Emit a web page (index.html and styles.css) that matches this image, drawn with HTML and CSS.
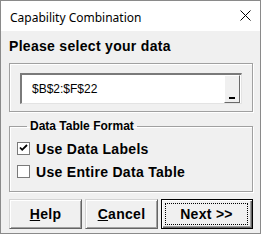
FILE: index.html
```html
<!DOCTYPE html>
<html>
<head>
    <title>Capability Combination</title>
    <link rel="stylesheet" href="styles.css">
</head>
<body>
    <div class="window">
        <div class="titlebar">
            <span class="title">Capability Combination</span>
            <svg class="close" width="11" height="11" viewBox="0 0 11 11">
                <path d="M0.5 0.5 L10.5 10.5 M10.5 0.5 L0.5 10.5" stroke="#000" stroke-width="1" fill="none"/>
            </svg>
        </div>
        <div class="content">
            <div class="prompt">Please select your data</div>
            <div class="frame">
                <div class="field">
                    <span class="field-text">$B$2:$F$22</span>
                    <span class="ref-btn"><span class="ref-bar"></span></span>
                </div>
            </div>
            <fieldset class="group">
                <legend>Data Table Format</legend>
                <label class="check">
                    <span class="box">
                        <svg width="11" height="11" viewBox="0 0 11 11">
                            <path d="M2 4.5 L4.2 6.8 L9 2" stroke="#000" stroke-width="1.8" fill="none"/>
                        </svg>
                    </span>
                    Use Data Labels
                </label>
                <label class="check">
                    <span class="box"></span>
                    Use Entire Data Table
                </label>
            </fieldset>
            <div class="buttons">
                <button class="btn"><u>H</u>elp</button>
                <button class="btn"><u>C</u>ancel</button>
                <button class="btn default"><span class="focus">Next &gt;&gt;</span></button>
            </div>
        </div>
    </div>
</body>
</html>
```

FILE: styles.css
```css
body {
    margin: 0;
    background: #fff;
}

.window {
    width: 261px;
    height: 234px;
    box-sizing: border-box;
    border: 1px solid #8a8a8a;
    display: flex;
    flex-direction: column;
    font-family: "Liberation Sans", Arial, sans-serif;
    color: #000;
}

.titlebar {
    height: 30px;
    flex: none;
    background: #fff;
    display: flex;
    align-items: center;
    justify-content: space-between;
    padding: 0 9px 0 9px;
}

.title {
    font-family: "Noto Sans", sans-serif;
    font-size: 12px;
    padding-top: 2px;
}

.close {
    margin-top: -1px;
}

.content {
    flex: 1;
    background: #f0f0f0;
    padding: 7px 7px 0 8px;
    display: flex;
    flex-direction: column;
}

.prompt {
    font-weight: bold;
    font-size: 14px;
    letter-spacing: 0.3px;
    line-height: 16px;
}

.frame {
    margin-top: 9px;
    border: 1px solid #a0a0a0;
    box-shadow: inset 1px 1px 0 #fff, 1px 1px 0 #fff;
    padding: 9px 10px 7px 10px;
}

.field {
    height: 31px;
    box-sizing: border-box;
    display: flex;
    align-items: center;
    background: #fff;
    border-style: solid;
    border-width: 2px 1px 1px 2px;
    border-color: #7a7a7a #e3e3e3 #e3e3e3 #7a7a7a;
}

.field-text {
    flex: 1;
    font-size: 12px;
    padding-left: 10px;
}

.ref-btn {
    width: 16px;
    height: 28px;
    box-sizing: border-box;
    margin-right: 1px;
    border: 1px solid;
    border-color: #fff #6a6a6a #6a6a6a #fff;
    background: #f0f0f0;
    display: flex;
    justify-content: center;
    align-items: flex-end;
    padding-bottom: 3px;
}

.ref-bar {
    width: 6px;
    height: 2px;
    background: #000;
}

.group {
    margin: 7px 0 0 0;
    padding: 4px 0 8px 7px;
    border: 1px solid #a0a0a0;
    box-shadow: inset 1px 1px 0 #fff, 1px 1px 0 #fff;
    min-width: 0;
}

.group legend {
    font-size: 12px;
    font-weight: bold;
    margin-left: 10px;
    padding: 0 3px;
}

.check {
    display: flex;
    align-items: center;
    height: 23px;
    gap: 6px;
    font-size: 14px;
    font-weight: bold;
    letter-spacing: 0.3px;
}

.box {
    width: 13px;
    height: 13px;
    box-sizing: border-box;
    border: 1px solid #7a7a7a;
    background: #fff;
    display: flex;
    align-items: center;
    justify-content: center;
}

.buttons {
    margin-top: 7px;
    display: flex;
    gap: 3px;
}

.btn {
    width: 73px;
    height: 30px;
    padding: 0;
    font-family: "Liberation Sans", Arial, sans-serif;
    font-size: 14px;
    font-weight: bold;
    letter-spacing: 0.3px;
    color: #000;
    background: #f0f0f0;
    border: 1px solid;
    border-color: #d4d4d4 #646464 #646464 #d4d4d4;
    box-shadow: inset 1px 1px 0 #fff, inset -1px -1px 0 #a0a0a0;
}

.btn.default {
    width: 92px;
    border: 1px solid #000;
    box-shadow: inset 1px 1px 0 #fff, inset -1px -1px 0 #646464, inset -2px -2px 0 #a0a0a0;
    padding: 3px 4px 3px 3px;
}

.focus {
    display: flex;
    align-items: center;
    justify-content: center;
    height: 100%;
    box-sizing: border-box;
    border: 1px dotted #000;
}
```
